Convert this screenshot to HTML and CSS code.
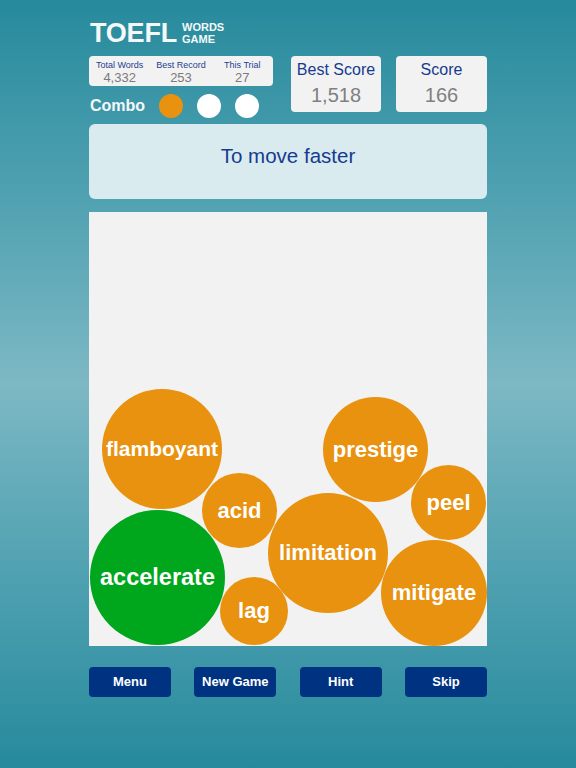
FILE: index.html
```html
<!DOCTYPE html>
<html>
<head>
<meta charset="utf-8">
<link rel="stylesheet" href="styles.css">
</head>
<body>
<div class="page">
  <div class="top">
    <div class="left">
      <div class="title">
        <span class="toefl">TOEFL</span>
        <span class="sub">WORDS<br>GAME</span>
      </div>
      <div class="stats">
        <div class="stat"><div class="label">Total Words</div><div class="num">4,332</div></div>
        <div class="stat"><div class="label">Best Record</div><div class="num">253</div></div>
        <div class="stat"><div class="label">This Trial</div><div class="num">27</div></div>
      </div>
      <div class="combo">
        <span class="combo-label">Combo</span>
        <span class="dot on"></span>
        <span class="dot"></span>
        <span class="dot"></span>
      </div>
    </div>
    <div class="score best">
      <div class="score-label">Best Score</div>
      <div class="score-num">1,518</div>
    </div>
    <div class="score cur">
      <div class="score-label">Score</div>
      <div class="score-num">166</div>
    </div>
  </div>
  <div class="hint">To move faster</div>
  <div class="board">
    <div class="ball b-flam">flamboyant</div>
    <div class="ball b-acid">acid</div>
    <div class="ball green b-acc">accelerate</div>
    <div class="ball b-lag">lag</div>
    <div class="ball b-lim">limitation</div>
    <div class="ball b-pres">prestige</div>
    <div class="ball b-peel">peel</div>
    <div class="ball b-miti">mitigate</div>
  </div>
  <div class="buttons">
    <div class="btn">Menu</div>
    <div class="btn">New Game</div>
    <div class="btn">Hint</div>
    <div class="btn">Skip</div>
  </div>
</div>
</body>
</html>
```
FILE: styles.css
```css
html, body {
  margin: 0;
  padding: 0;
}
body {
  width: 576px;
  height: 768px;
  overflow: hidden;
  font-family: "Liberation Sans", Arial, sans-serif;
  background: linear-gradient(to bottom, #268a9c 0%, #4fa1b1 25%, #7db8c4 50%, #4fa1b1 75%, #268a9c 100%);
}
.page {
  width: 398px;
  margin-left: 89px;
  padding-top: 20px;
}
.top {
  display: flex;
  align-items: flex-start;
}
.left {
  width: 184px;
}
.title {
  display: flex;
  align-items: flex-start;
  height: 27px;
}
.toefl {
  color: #f4f8f9;
  font-weight: bold;
  font-size: 27px;
  line-height: 27px;
  margin-left: 1px;
  letter-spacing: -0.2px;
}
.sub {
  color: #f4f8f9;
  font-weight: bold;
  font-size: 11px;
  line-height: 12px;
  margin-left: 5px;
  margin-top: 1px;
}
.stats {
  margin-top: 9px;
  height: 30px;
  box-sizing: border-box;
  padding-top: 4px;
  background: #f2f2f2;
  border-radius: 4px;
  display: grid;
  grid-template-columns: 1fr 1fr 1fr;
  text-align: center;
}
.label {
  font-size: 9px;
  line-height: 11px;
  color: #1e3f8f;
}
.num {
  font-size: 13px;
  line-height: 14px;
  color: #7a7a7a;
}
.combo {
  margin-top: 9px;
  height: 22px;
  display: flex;
  align-items: center;
}
.combo-label {
  color: #f4f8f9;
  font-weight: bold;
  font-size: 16px;
  line-height: 22px;
  width: 69px;
  margin-left: 1px;
}
.dot {
  width: 24px;
  height: 24px;
  border-radius: 50%;
  background: #ffffff;
  margin-right: 14px;
  flex: none;
}
.dot.on {
  background: #e8920f;
}
.score {
  margin-top: 36px;
  height: 56px;
  box-sizing: border-box;
  padding-top: 5px;
  background: #f2f2f2;
  border-radius: 4px;
  text-align: center;
}
.best {
  width: 90px;
  margin-left: 18px;
}
.cur {
  width: 91px;
  margin-left: 15px;
}
.score-label {
  font-size: 16px;
  line-height: 18px;
  color: #163b8f;
}
.score-num {
  margin-top: 5px;
  font-size: 20px;
  line-height: 22px;
  color: #808080;
}
.hint {
  margin-top: 7px;
  height: 75px;
  box-sizing: border-box;
  padding-top: 20px;
  background: #d9ebef;
  border-radius: 6px;
  text-align: center;
  font-size: 20.5px;
  line-height: 24px;
  color: #163b8f;
}
.board {
  position: relative;
  margin-top: 13px;
  height: 434px;
  background: #f2f2f2;
  overflow: hidden;
}
.ball {
  position: absolute;
  border-radius: 50%;
  background: #e8920f;
  color: #ffffff;
  font-weight: bold;
  font-size: 22px;
  display: flex;
  align-items: center;
  justify-content: center;
  white-space: nowrap;
}
.ball.green {
  background: #00a61c;
}
.b-flam { left: 13px; top: 177px; width: 120px; height: 120px; font-size: 21px; }
.b-acid { left: 113px; top: 261px; width: 75px; height: 75px; }
.b-acc { left: 1px; top: 298px; width: 135px; height: 135px; font-size: 23.5px; }
.b-lag { left: 131px; top: 365px; width: 68px; height: 68px; }
.b-lim { left: 179px; top: 281px; width: 120px; height: 120px; }
.b-pres { left: 234px; top: 185px; width: 105px; height: 105px; }
.b-peel { left: 322px; top: 253px; width: 75px; height: 75px; }
.b-miti { left: 292px; top: 328px; width: 106px; height: 106px; }
.buttons {
  margin-top: 21px;
  display: flex;
  justify-content: space-between;
}
.btn {
  width: 82px;
  height: 30px;
  background: #003282;
  border-radius: 4px;
  color: #ffffff;
  font-weight: bold;
  font-size: 13px;
  line-height: 30px;
  text-align: center;
}
```
